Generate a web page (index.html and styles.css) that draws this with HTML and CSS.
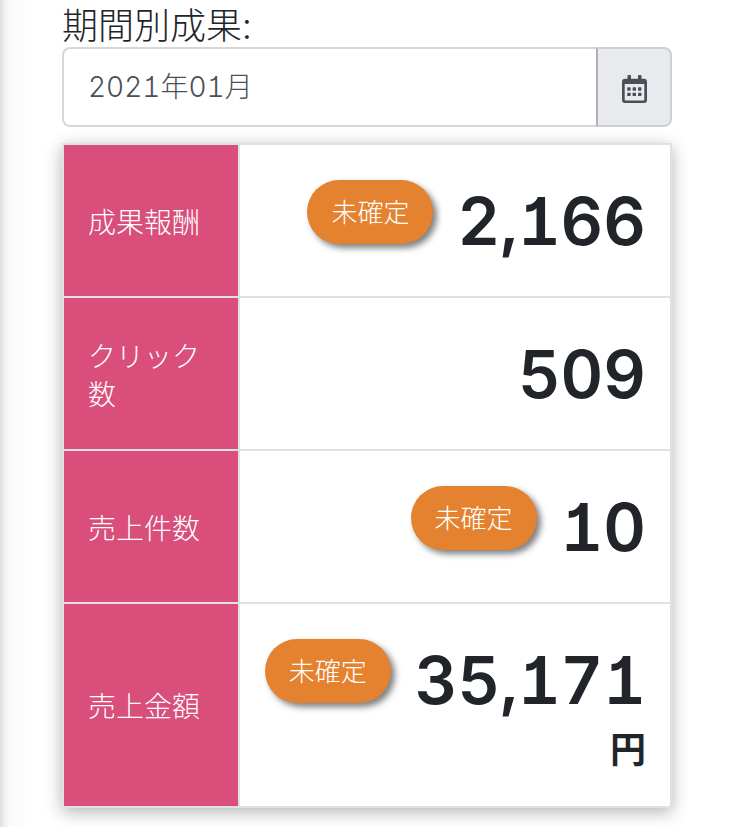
FILE: index.html
```html
<!DOCTYPE html>
<html lang="ja">
<head>
    <meta charset="UTF-8">
    <meta name="viewport" content="width=device-width, initial-scale=1.0">
    <title>期間別成果</title>
    <link rel="stylesheet" href="styles.css">
</head>
<body>
    <main class="report">
        <label class="period-label" for="period">期間別成果:</label>
        <div class="input-group">
            <input type="text" id="period" value="2021年01月">
            <button type="button" aria-label="カレンダー">
                <svg class="calendar" viewBox="0 0 25 28" aria-hidden="true">
                    <path fill-rule="evenodd" d="M5.5 1a1 1 0 0 1 1-1h1.500a1 1 0 0 1 1 1v2.800h7V1a1 1 0 0 1 1-1h1.500a1 1 0 0 1 1 1v2.800h2.500a3 3 0 0 1 3 3V25a3 3 0 0 1-3 3h-19A3 3 0 0 1 0 25V6.800a3 3 0 0 1 3-3h2.500zM2.700 9v15.700q0 .8.800.8h18q.800 0 .800-.8V9z"/>
                    <rect x="5.200" y="12.300" width="3.400" height="3.400" rx=".6"/>
                    <rect x="10.600" y="12.300" width="3.400" height="3.400" rx=".6"/>
                    <rect x="16" y="12.300" width="3.400" height="3.400" rx=".6"/>
                    <rect x="5.200" y="17.700" width="3.400" height="3.400" rx=".6"/>
                    <rect x="10.600" y="17.700" width="3.400" height="3.400" rx=".6"/>
                    <rect x="16" y="17.700" width="3.400" height="3.400" rx=".6"/>
                </svg>
            </button>
        </div>
        <table class="result-table">
            <tbody>
                <tr>
                    <th scope="row">成果報酬</th>
                    <td>
                        <div class="result">
                            <span class="badge">未確定</span>
                            <span class="number">2,166</span>
                        </div>
                    </td>
                </tr>
                <tr>
                    <th scope="row">クリック数</th>
                    <td>
                        <div class="result">
                            <span class="number">509</span>
                        </div>
                    </td>
                </tr>
                <tr>
                    <th scope="row">売上件数</th>
                    <td>
                        <div class="result">
                            <span class="badge">未確定</span>
                            <span class="number">10</span>
                        </div>
                    </td>
                </tr>
                <tr>
                    <th scope="row">売上金額</th>
                    <td>
                        <div class="result">
                            <span class="badge">未確定</span>
                            <span class="number">35,171</span>
                            <span class="unit">円</span>
                        </div>
                    </td>
                </tr>
            </tbody>
        </table>
    </main>
</body>
</html>
```

FILE: styles.css
```css
* {
    box-sizing: border-box;
}
body {
    margin: 0;
    background: #fff;
    color: #212529;
    font-family: Inter, "Noto Sans CJK JP", sans-serif;
    font-weight: 300;
    font-feature-settings: "tnum", "cv01";
}
.report {
    min-height: 100vh;
    padding: 3px 78px 19px 62px;
    background: linear-gradient(to right, #dcdcdc, #f3f3f3 5px, #fbfbfb 12px, #fff 30px);
}
.period-label {
    display: block;
    padding-top: 2px;
    font-size: 36px;
    line-height: 42px;
}
.input-group {
    display: flex;
    height: 80px;
    margin-bottom: 16px;
}
.input-group input {
    flex: 1;
    min-width: 0;
    padding: 0 24px 4px;
    border: 2px solid #d5d7d9;
    border-right: 0;
    border-radius: 8px 0 0 8px;
    background: #fff;
    color: #495057;
    font: inherit;
    font-size: 28px;
    font-feature-settings: inherit;
}
.input-group button {
    display: flex;
    align-items: center;
    justify-content: center;
    width: 76px;
    padding: 4px 0 0;
    border: 2px solid #ced0d7;
    border-left-color: #afb1b7;
    border-radius: 0 8px 8px 0;
    background: #e9eaee;
    cursor: pointer;
}
.calendar {
    width: 25px;
    height: 28px;
    fill: #495057;
}
.result-table {
    width: 100%;
    table-layout: fixed;
    border-collapse: collapse;
    box-shadow: 0 4px 16px rgba(0, 0, 0, 0.3);
}
.result-table th,
.result-table td {
    padding: 24px;
    border: 2px solid #dee2e6;
}
.result-table th {
    width: 176px;
    padding-top: 28px;
    background: #d94e7a;
    color: #fff;
    font-size: 28px;
    font-weight: 300;
    line-height: 38px;
    text-align: left;
}
.result-table td {
    background: #fff;
}
.result {
    display: flex;
    flex-wrap: wrap;
    align-items: flex-start;
    justify-content: flex-end;
    column-gap: 24px;
}
.badge {
    margin-top: 11px;
    padding: 2px 24px 0;
    border-radius: 32px;
    background: #e4822f;
    box-shadow: 4px 4px 6px rgba(0, 0, 0, 0.5);
    color: #fff;
    font-size: 26px;
    line-height: 62px;
}
.number {
    padding-top: 2px;
    font-size: 66px;
    font-weight: 600;
    line-height: 101px;
}
.unit {
    padding-bottom: 12px;
    font-size: 36px;
    font-weight: 600;
    line-height: 39px;
}
```
